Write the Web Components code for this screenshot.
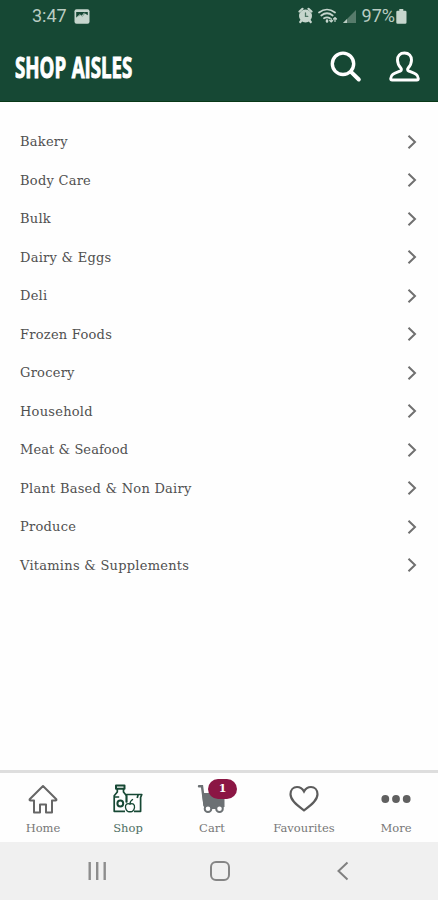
<!DOCTYPE html>
<html lang="en">
<head>
<meta charset="utf-8">
<meta name="viewport" content="width=device-width, initial-scale=1">
<title>Shop Aisles</title>
<style>
  body {
    margin: 0;
    background: #fefefe;
    font-family: "DejaVu Serif", serif;
  }
</style>
</head>
<body>
<shop-app>
  <status-bar slot="header" time="3:47" battery="97%"></status-bar>
  <app-header slot="header">Shop Aisles</app-header>
  <aisle-row>Bakery</aisle-row>
  <aisle-row>Body Care</aisle-row>
  <aisle-row>Bulk</aisle-row>
  <aisle-row>Dairy &amp; Eggs</aisle-row>
  <aisle-row>Deli</aisle-row>
  <aisle-row>Frozen Foods</aisle-row>
  <aisle-row>Grocery</aisle-row>
  <aisle-row>Household</aisle-row>
  <aisle-row style="--track: 0.08px">Meat &amp; Seafood</aisle-row>
  <aisle-row>Plant Based &amp; Non Dairy</aisle-row>
  <aisle-row>Produce</aisle-row>
  <aisle-row>Vitamins &amp; Supplements</aisle-row>
  <tab-bar slot="footer">
    <tab-item icon="home" style="width: 86px">Home</tab-item>
    <tab-item icon="shop" active>Shop</tab-item>
    <tab-item icon="cart" badge="1">Cart</tab-item>
    <tab-item icon="heart" style="width: 100px">Favourites</tab-item>
    <tab-item icon="more">More</tab-item>
  </tab-bar>
  <system-nav slot="footer"></system-nav>
</shop-app>

<script>
class ShopApp extends HTMLElement {
  constructor () {
    super()
    this.shadow = this.attachShadow({ mode: 'open' })
  }

  connectedCallback () {
    this.shadow.innerHTML =
      /* html */`
      <style>
        :host {
          display: flex;
          flex-direction: column;
          height: 900px;
          width: 438px;
          overflow: hidden;
        }
        header {
          background: #164834;
          border-bottom: 1px solid #083817;
          box-sizing: border-box;
          height: 102px;
        }
        main {
          flex: 1;
          padding-top: 20.5px;
        }
      </style>
      <header><slot name="header"></slot></header>
      <main><slot></slot></main>
      <footer><slot name="footer"></slot></footer>
      `
  }
}

class StatusBar extends HTMLElement {
  constructor () {
    super()
    this.shadow = this.attachShadow({ mode: 'open' })
  }

  connectedCallback () {
    this.shadow.innerHTML =
      /* html */`
      <style>
        :host {
          align-items: center;
          box-sizing: border-box;
          color: #b9ccc2;
          display: flex;
          font: 18px/32px Roboto, sans-serif;
          height: 32px;
          padding: 0 31px 0 32px;
        }
        svg { display: block; }
        .picture { margin-left: 7px; }
        .right {
          align-items: center;
          display: flex;
          margin-left: auto;
        }
        .battery { margin-left: 1px; }
      </style>
      <span>${this.getAttribute('time')}</span>
      <svg class="picture" width="16" height="15" viewBox="0 0 16 15">
        <rect x=".5" y=".3" width="15" height="14.4" rx="2" fill="#c6d6cd"/>
        <path d="M2.2 8.500V3h11.600v3.200L11 4.500 8.300 7.500 6 6.200z" fill="#164834"/>
        <path d="M3.200 8.200l2.600-2.400 2 1.400 2.700-3.400" fill="none" stroke="#c6d6cd"/>
      </svg>
      <div class="right">
        <svg width="64" height="18" viewBox="0 0 64 18">
          <g fill="none" stroke="#c6d6cd" stroke-linecap="round">
            <path d="M1.500 4.500l3-2.700M13.500 4.500l-3-2.700M2.300 15l1.500-2M12.700 15l-1.500-2" stroke-width="2.200"/>
            <circle cx="7.500" cy="9" r="6.500" fill="#c6d6cd" stroke="none"/>
            <path d="M7.500 6v3.300h2.300" stroke="#4d7463" stroke-width="1.300"/>
            <path d="M21 5.500q8-6 16 0M23.300 8.500q5.700-4.500 11.400 0M26 11.300q3-2 6 0" stroke-width="1.700"/>
            <path d="M29 13.500v1" stroke-width="2.500"/>
            <path d="M33.200 15v-3.500m-1.500 2l1.500 1.500 1.500-1.500M37 10.500v4m-1.500-2.500l1.500-1.500 1.500 1.500" stroke-width="1.200"/>
          </g>
          <path d="M45 16L58 3v13z" fill="#577b6b"/>
          <path d="M45 16l4-4v4z" fill="#b9ccc2"/>
        </svg>
        <span>${this.getAttribute('battery')}</span>
        <svg class="battery" width="11" height="15" viewBox="0 0 11 15">
          <path d="M3.300 0h4v1.700h1.900q1.300 0 1.300 1.300v10.500q0 1.300-1.300 1.300H1.600Q.3 14.800.3 13.500V3q0-1.300 1.300-1.300h1.700z" fill="#c6d6cd"/>
        </svg>
      </div>
      `
  }
}

class AppHeader extends HTMLElement {
  constructor () {
    super()
    this.shadow = this.attachShadow({ mode: 'open' })
  }

  connectedCallback () {
    this.shadow.innerHTML =
      /* html */`
      <style>
        :host {
          align-items: center;
          box-sizing: border-box;
          display: flex;
          height: 69px;
          padding: 0 18px 0 15px;
        }
        h1 {
          -webkit-text-stroke: 1px #fff;
          color: #fff;
          font: bold 28.5px/30px "Open Sans", sans-serif;
          margin: 0;
          text-transform: uppercase;
          transform: scaleX(.655);
          transform-origin: left;
          white-space: nowrap;
          width: 118px;
          word-spacing: 1px;
        }
        .actions {
          display: flex;
          gap: 27px;
          margin-left: auto;
        }
        svg { display: block; }
      </style>
      <h1><slot></slot></h1>
      <div class="actions">
        <svg width="32" height="32" viewBox="0 0 32 32" fill="none" stroke="#fff" stroke-linecap="round">
          <circle cx="13" cy="12.800" r="10.700" stroke-width="3.400"/>
          <path d="M21 20.800l7.800 7.700" stroke-width="4"/>
        </svg>
        <svg width="31" height="32" viewBox="0 0 31 32" fill="none" stroke="#fff" stroke-width="2.900" stroke-linejoin="round">
          <path d="M15.500 2c-4.500 0-7 3-7 7 0 3.500 1.500 6 3.300 8 1 1.200.8 2.500-.6 3.100-5.700 2.300-9.200 3-9.500 7.500q0 1.400 1.400 1.400h24.800q1.400 0 1.400-1.400c-.3-4.500-3.800-5.200-9.500-7.500-1.400-.6-1.600-1.900-.6-3.100 1.800-2 3.300-4.500 3.300-8 0-4-2.500-7-7-7z"/>
        </svg>
      </div>
      `
  }
}

class AisleRow extends HTMLElement {
  constructor () {
    super()
    this.shadow = this.attachShadow({ mode: 'open' })
  }

  connectedCallback () {
    this.shadow.innerHTML =
      /* html */`
      <style>
        :host {
          align-items: center;
          box-sizing: border-box;
          color: #505050;
          display: flex;
          font-size: 13px;
          height: 38.5px;
          justify-content: space-between;
          letter-spacing: var(--track, 0.25px);
          padding: 0 21px 0 20px;
        }
        svg { display: block; }
      </style>
      <span><slot></slot></span>
      <svg width="10" height="16" viewBox="0 0 10 16">
        <path d="M1.500 1.700L8 8l-6.500 6.300" fill="none" stroke="#707070" stroke-width="2"/>
      </svg>
      `
  }
}

class TabBar extends HTMLElement {
  constructor () {
    super()
    this.shadow = this.attachShadow({ mode: 'open' })
  }

  connectedCallback () {
    this.shadow.innerHTML =
      /* html */`
      <style>
        :host {
          border-top: 3px solid #dedede;
          box-sizing: border-box;
          display: flex;
          height: 72px;
        }
      </style>
      <slot></slot>
      `
  }
}

const ICONS = {
  home: /* html */`
    <path d="M15 2L1.700 15.200q-.5 1.300.8 1.300H6v12h6v-8h6v8h6v-12h3.500q1.300 0 .8-1.300z" fill="none" stroke="#666" stroke-width="2" stroke-linejoin="round"/>`,
  shop: /* html */`
    <g fill="none" stroke="#164834" stroke-width="1.700" stroke-linejoin="round">
      <rect x="3" y="1.500" width="8.500" height="3.300" stroke-width="2"/>
      <path d="M4.300 5v3L1.200 11.700v15.600H12M10.500 5v3l3 3.700v7M1.200 13h5"/>
      <circle cx="7.300" cy="19.500" r="2.900" stroke-width="2"/>
      <path d="M13.500 18v-7.500H28.800l-1.200 3v13.800H21M25.200 10.500l-1 3.500"/>
      <path d="M17 20.300c-2.500-1.500-5 0-4.500 3.300.5 2.800 2.500 4.700 4.500 4 2 .7 4-1.200 4.500-4 .5-3.300-2-4.800-4.500-3.300zM17 19.800q0-3 3-4.600" stroke-width="1.300"/>
    </g>`,
  cart: /* html */`
    <path d="M2 2.300h3L7.500 21" fill="none" stroke="#6c7174" stroke-width="2.400" stroke-linecap="round"/>
    <path d="M5 9h22.500v13.500L25 25H8L6.500 22z" fill="#6c7174"/>
    <g fill="#fff" stroke="#6c7174" stroke-width="2"><circle cx="11" cy="24.700" r="3.300"/><circle cx="22.500" cy="24.700" r="3.300"/></g>`,
  heart: /* html */`
    <path d="M15 26.300C10 22.500 1.500 17 1.500 10.200c0-4.500 3-7.200 6.500-7.200 3 0 5.500 1.700 7 4.500 1.500-2.800 4-4.500 7-4.500 3.500 0 6.500 2.700 6.500 7.200 0 6.800-8.500 12.300-13.500 16.100z" fill="none" stroke="#5c5c5c" stroke-width="2.200"/>`,
  more: /* html */`
    <g fill="#606060"><circle cx="4.300" cy="15" r="3.900"/><circle cx="15" cy="15" r="3.900"/><circle cx="25.700" cy="15" r="3.900"/></g>`
}

class TabItem extends HTMLElement {
  constructor () {
    super()
    this.shadow = this.attachShadow({ mode: 'open' })
  }

  connectedCallback () {
    const badge = this.getAttribute('badge')
    this.shadow.innerHTML =
      /* html */`
      <style>
        :host {
          align-items: center;
          box-sizing: border-box;
          color: #777;
          display: flex;
          flex-direction: column;
          font-size: 11.5px;
          padding-top: 11px;
          width: 84px;
        }
        :host([active]) { color: #507064; }
        .icon {
          height: 30px;
          position: relative;
          width: 30px;
        }
        svg { display: block; }
        .badge {
          background: #8b1644;
          border-radius: 10px;
          color: #fff;
          font: bold 11px/19px "DejaVu Serif", serif;
          height: 20px;
          left: 11px;
          position: absolute;
          text-align: center;
          top: -5px;
          width: 29px;
        }
        .label {
          line-height: 16px;
          margin-top: 6px;
        }
      </style>
      <div class="icon">
        <svg width="30" height="30" viewBox="0 0 30 30">${ICONS[this.getAttribute('icon')]}</svg>
        ${badge ? `<span class="badge">${badge}</span>` : ''}
      </div>
      <span class="label"><slot></slot></span>
      `
  }
}

class SystemNav extends HTMLElement {
  constructor () {
    super()
    this.shadow = this.attachShadow({ mode: 'open' })
  }

  connectedCallback () {
    this.shadow.innerHTML =
      /* html */`
      <style>
        :host {
          align-items: center;
          background: #f0f0f0;
          box-sizing: border-box;
          display: flex;
          height: 58px;
          justify-content: space-between;
          padding: 0 85px 0 87px;
        }
        svg { display: block; }
      </style>
      <svg width="20" height="20" viewBox="0 0 20 20" stroke="#8d8d8d" stroke-width="2.400"><path d="M2.700 1v18M10.200 1v18M17.700 1v18"/></svg>
      <svg width="22" height="22" viewBox="0 0 22 22" fill="none" stroke="#858585" stroke-width="2"><rect x="2" y="2" width="18" height="18" rx="5"/></svg>
      <svg width="20" height="20" viewBox="0 0 20 20" fill="none" stroke="#808080" stroke-width="2"><path d="M14.500 1.500L5.500 10l9 8.500"/></svg>
      `
  }
}

customElements.define('shop-app', ShopApp)
customElements.define('status-bar', StatusBar)
customElements.define('app-header', AppHeader)
customElements.define('aisle-row', AisleRow)
customElements.define('tab-bar', TabBar)
customElements.define('tab-item', TabItem)
customElements.define('system-nav', SystemNav)
</script>
</body>
</html>
